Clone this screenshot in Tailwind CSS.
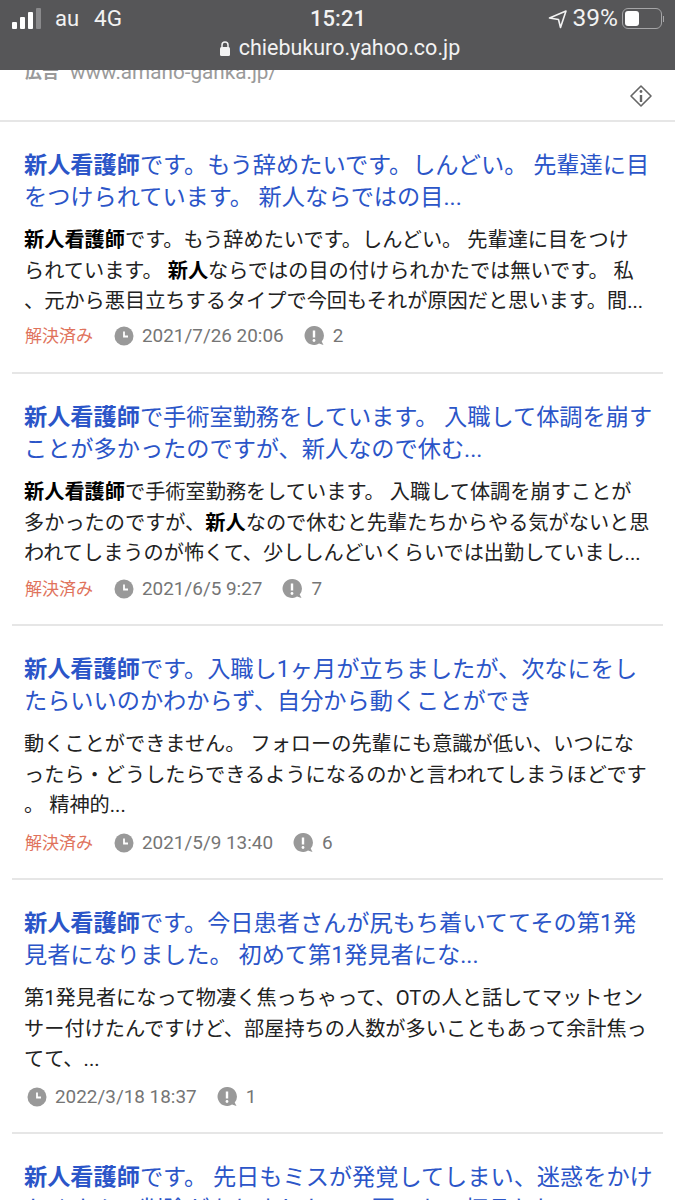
<!DOCTYPE html>
<html lang="ja">
<head>
<meta charset="UTF-8">
<title>chiebukuro</title>
<script src="https://cdn.jsdelivr.net/npm/@tailwindcss/browser@4"></script>
</head>
<body class="bg-white">
<div class="w-[675px] h-[1200px] overflow-hidden font-['Roboto','Noto_Sans_CJK_JP',sans-serif]">

  <!-- status bar -->
  <header class="h-[70px] bg-[#565658] text-[#f2f2f2] relative z-10">
    <div class="h-[37px] pl-[12px] pr-[11px] flex items-center justify-between">
      <div class="flex items-center w-[250px]">
        <svg width="30" height="22" viewBox="0 0 30 22"><rect x="0" y="14" width="5" height="7" rx="1" fill="#fff"/><rect x="8" y="9" width="5" height="12" rx="1" fill="#fff"/><rect x="16" y="4" width="5" height="17" rx="1" fill="#fff"/><rect x="24" y="0" width="5" height="21" rx="1" fill="#8a8a8c"/></svg>
        <span class="ml-[13px] text-[22px]">au</span>
        <span class="ml-[15px] text-[22.5px]">4G</span>
      </div>
      <span class="text-[22px] font-medium">15:21</span>
      <div class="flex items-center w-[250px] justify-end">
        <svg width="20" height="20" viewBox="0 0 20 20" fill="none" stroke="#f2f2f2" stroke-width="1.6" stroke-linejoin="round"><path d="M1.5 9 18 2 12.5 18.5 10.5 10.5Z"/></svg>
        <span class="ml-[5px] text-[24.5px]">39%</span>
        <div class="ml-[4px] w-[40px] h-[21px] rounded-[6px] border border-[#a5a5a7] p-[2px]"><div class="w-[14px] h-full rounded-[3px] bg-white"></div></div>
        <div class="w-[1px] h-[6px] bg-[#a5a5a7] ml-[1px]"></div>
      </div>
    </div>
    <div class="flex items-center justify-center h-[22px] pl-[4px]">
      <svg width="12" height="17" viewBox="0 0 12 17" class="mr-[8px]"><path d="M3 8V5a3 3 0 0 1 6 0v3" fill="none" stroke="#f2f2f2" stroke-width="1.5"/><rect x="1" y="7" width="10" height="9" rx="1.5" fill="#f2f2f2"/></svg>
      <span class="text-[21.5px]">chiebukuro.yahoo.co.jp</span>
    </div>
  </header>

  <!-- ad, cut off by the bar -->
  <div class="h-[52px] border-b-2 border-[#e6e6e6] overflow-hidden relative">
    <div class="flex items-center text-[20.7px] leading-[24px] -mt-[10px] pl-[25px] text-[#9a9a9a]">
      <span class="font-bold text-[17px] mr-[11px]">広告</span><span>www.amano-ganka.jp/</span>
    </div>
    <svg class="absolute left-[629px] top-[14px]" width="24" height="24" viewBox="0 0 24 24" fill="none"><path d="M12 2 22 12 12 22 2 12Z" stroke="#666" stroke-width="1.6" stroke-linejoin="round"/><circle cx="12" cy="7.5" r="1.4" fill="#666"/><path d="M12 11v7" stroke="#666" stroke-width="2.4"/></svg>
  </div>

  <main>
    <article class="mx-[12px] px-[12px] h-[252px] border-b-2 border-[#e6e6e6] pt-[27px]">
      <h2 class="text-[23.2px] leading-[32px] text-[#2b55c8] whitespace-nowrap"><b>新人看護師</b>です。もう辞めたいです。しんどい。 先輩達に目<br>をつけられています。 新人ならではの目...</h2>
      <p class="mt-[12px] text-[20.2px] leading-[30.5px] text-[#222] whitespace-nowrap"><b class="text-black">新人看護師</b>です。もう辞めたいです。しんどい。 先輩達に目をつけ<br>られています。 <b class="text-black">新人</b>ならではの目の付けられかたでは無いです。 私<br>、元から悪目立ちするタイプで今回もそれが原因だと思います。間...</p>
      <div class="mt-[7px] flex items-center text-[18.9px] leading-[24px] text-[#757575]">
        <span class="text-[#e0735c] text-[17px] mr-[21px] ml-[1px]">解決済み</span>
        <svg width="20" height="20" viewBox="0 0 20 20"><circle cx="10" cy="10" r="9.5" fill="#999"/><path d="M10 5.5v5h4" fill="none" stroke="#fff" stroke-width="1.8"/></svg>
        <span class="ml-[8px]">2021/7/26 20:06</span>
        <svg class="ml-[20px]" width="21" height="20" viewBox="0 0 21 20"><path d="M10 0a9.5 9.5 0 1 0 5 17.6l4.5 1.4-1.8-3.5A9.5 9.5 0 0 0 10 0Z" fill="#999"/><path d="M10 4.5v7" stroke="#fff" stroke-width="2.4"/><circle cx="10" cy="14.5" r="1.4" fill="#fff"/></svg>
        <span class="ml-[8px]">2</span>
      </div>
    </article>

    <article class="mx-[12px] px-[12px] h-[252px] border-b-2 border-[#e6e6e6] pt-[27px]">
      <h2 class="text-[23.2px] leading-[32px] text-[#2b55c8] whitespace-nowrap"><b>新人看護師</b>で手術室勤務をしています。 入職して体調を崩す<br>ことが多かったのですが、新人なので休む...</h2>
      <p class="mt-[12px] text-[20.2px] leading-[30.5px] text-[#222] whitespace-nowrap"><b class="text-black">新人看護師</b>で手術室勤務をしています。 入職して体調を崩すことが<br>多かったのですが、<b class="text-black">新人</b>なので休むと先輩たちからやる気がないと思<br>われてしまうのが怖くて、少ししんどいくらいでは出勤していまし...</p>
      <div class="mt-[8px] flex items-center text-[18.9px] leading-[24px] text-[#757575]">
        <span class="text-[#e0735c] text-[17px] mr-[21px] ml-[1px]">解決済み</span>
        <svg width="20" height="20" viewBox="0 0 20 20"><circle cx="10" cy="10" r="9.5" fill="#999"/><path d="M10 5.5v5h4" fill="none" stroke="#fff" stroke-width="1.8"/></svg>
        <span class="ml-[8px]">2021/6/5 9:27</span>
        <svg class="ml-[20px]" width="21" height="20" viewBox="0 0 21 20"><path d="M10 0a9.5 9.5 0 1 0 5 17.6l4.5 1.4-1.8-3.5A9.5 9.5 0 0 0 10 0Z" fill="#999"/><path d="M10 4.5v7" stroke="#fff" stroke-width="2.4"/><circle cx="10" cy="14.5" r="1.4" fill="#fff"/></svg>
        <span class="ml-[8px]">7</span>
      </div>
    </article>

    <article class="mx-[12px] px-[12px] h-[254px] border-b-2 border-[#e6e6e6] pt-[27px]">
      <h2 class="text-[23.2px] leading-[32px] text-[#2b55c8] whitespace-nowrap"><b>新人看護師</b>です。入職し1ヶ月が立ちましたが、次なにをし<br>たらいいのかわからず、自分から動くことができ</h2>
      <p class="mt-[12px] text-[20.2px] leading-[30.5px] text-[#222] whitespace-nowrap">動くことができません。 フォローの先輩にも意識が低い、いつにな<br>ったら・どうしたらできるようになるのかと言われてしまうほどです<br>。 精神的...</p>
      <div class="mt-[10px] flex items-center text-[18.9px] leading-[24px] text-[#757575]">
        <span class="text-[#e0735c] text-[17px] mr-[21px] ml-[1px]">解決済み</span>
        <svg width="20" height="20" viewBox="0 0 20 20"><circle cx="10" cy="10" r="9.5" fill="#999"/><path d="M10 5.5v5h4" fill="none" stroke="#fff" stroke-width="1.8"/></svg>
        <span class="ml-[8px]">2021/5/9 13:40</span>
        <svg class="ml-[20px]" width="21" height="20" viewBox="0 0 21 20"><path d="M10 0a9.5 9.5 0 1 0 5 17.6l4.5 1.4-1.8-3.5A9.5 9.5 0 0 0 10 0Z" fill="#999"/><path d="M10 4.5v7" stroke="#fff" stroke-width="2.4"/><circle cx="10" cy="14.5" r="1.4" fill="#fff"/></svg>
        <span class="ml-[8px]">6</span>
      </div>
    </article>

    <article class="mx-[12px] px-[12px] h-[254px] border-b-2 border-[#e6e6e6] pt-[27px]">
      <h2 class="text-[23.2px] leading-[32px] text-[#2b55c8] whitespace-nowrap"><b>新人看護師</b>です。今日患者さんが尻もち着いててその第1発<br>見者になりました。 初めて第1発見者にな...</h2>
      <p class="mt-[12px] text-[20.2px] leading-[30.5px] text-[#222] whitespace-nowrap">第1発見者になって物凄く焦っちゃって、OTの人と話してマットセン<br>サー付けたんですけど、部屋持ちの人数が多いこともあって余計焦っ<br>てて、...</p>
      <div class="mt-[10px] flex items-center text-[18.9px] leading-[24px] text-[#757575] pl-[3px]">
        <svg width="20" height="20" viewBox="0 0 20 20"><circle cx="10" cy="10" r="9.5" fill="#999"/><path d="M10 5.5v5h4" fill="none" stroke="#fff" stroke-width="1.8"/></svg>
        <span class="ml-[8px]">2022/3/18 18:37</span>
        <svg class="ml-[20px]" width="21" height="20" viewBox="0 0 21 20"><path d="M10 0a9.5 9.5 0 1 0 5 17.6l4.5 1.4-1.8-3.5A9.5 9.5 0 0 0 10 0Z" fill="#999"/><path d="M10 4.5v7" stroke="#fff" stroke-width="2.4"/><circle cx="10" cy="14.5" r="1.4" fill="#fff"/></svg>
        <span class="ml-[8px]">1</span>
      </div>
    </article>

    <article class="mx-[12px] px-[12px] pt-[27px]">
      <h2 class="text-[23.2px] leading-[32px] text-[#2b55c8] whitespace-nowrap"><b>新人看護師</b>です。 先日もミスが発覚してしまい、迷惑をかけ<br>たくさんの削除がありましたので悪口も一杯言われ</h2>
    </article>
  </main>
</div>
</body>
</html>
